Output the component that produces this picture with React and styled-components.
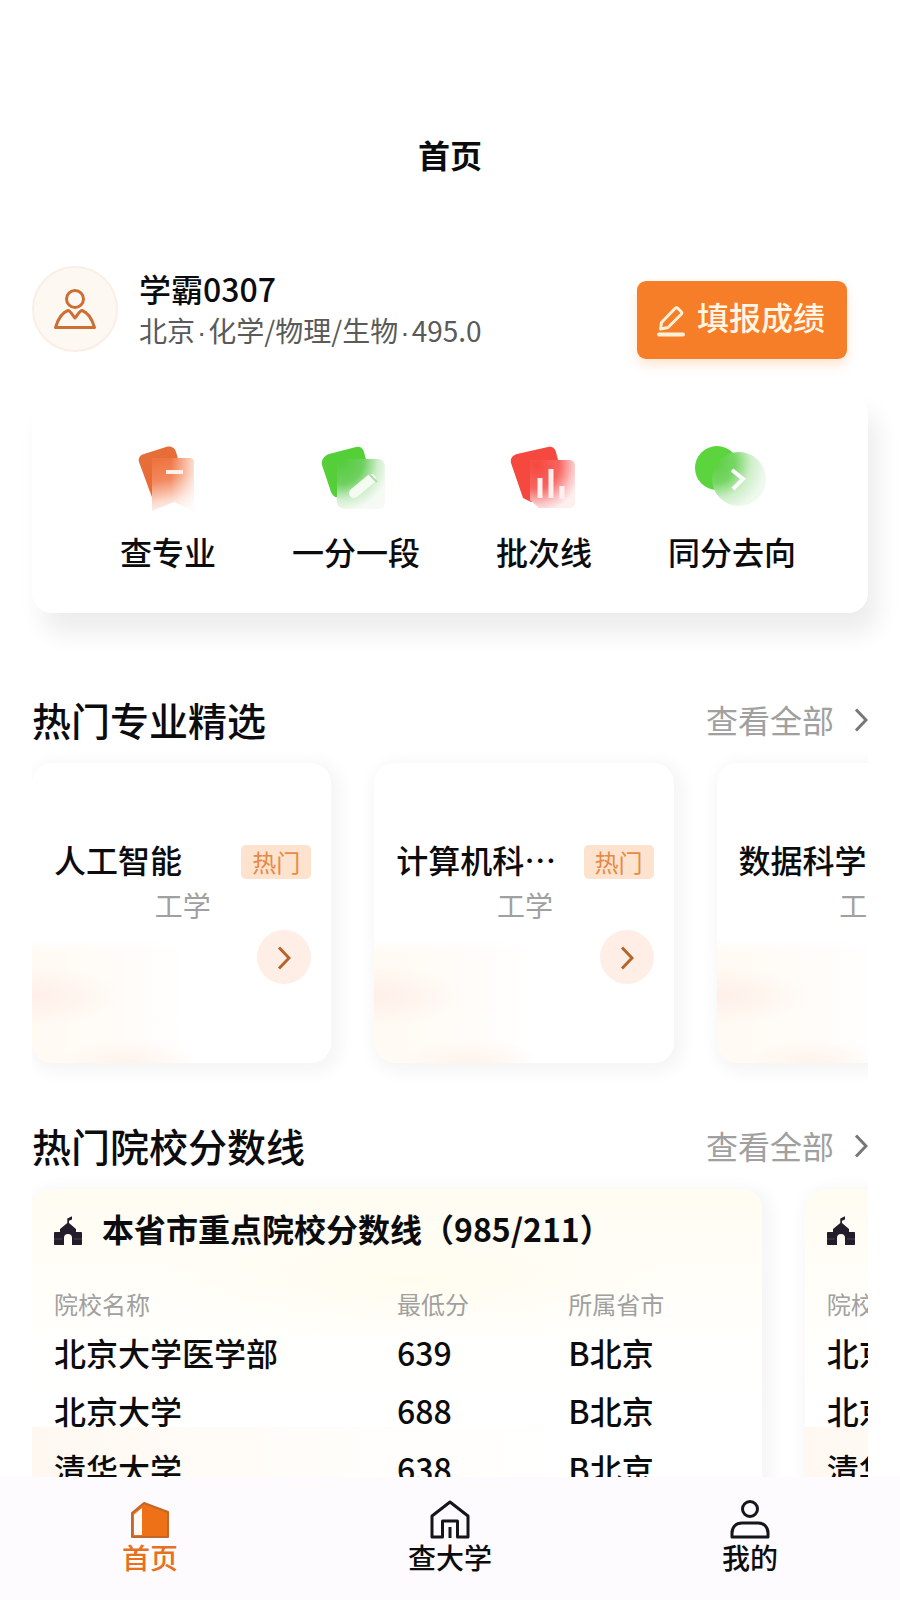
import React from 'react';
import styled, { createGlobalStyle, css } from 'styled-components';

const colors = {
    TEXT_PRIMARY: '#0c0c0e',
    TEXT_SECONDARY: '#5a5a5a',
    TEXT_MUTED: '#a0a0a0',
    ORANGE: '#f77e28',
    ORANGE_DARK: '#e8701c',
    WHITE: '#ffffff',
    NAV: '#fdfbfe',
};

const FONT_SIZE = {
    SMALL: '24px',
    BASE: '28px',
    BIG: '32px',
    HUGE: '39px',
};

const GlobalStyle = createGlobalStyle`
    * {
        box-sizing: border-box;
    }

    body {
        margin: 0;
        background: ${colors.WHITE};
        color: ${colors.TEXT_PRIMARY};
        font-family: 'Noto Sans CJK SC', sans-serif;
        font-size: ${FONT_SIZE.BIG};
        line-height: 40px;
        font-weight: 500;
    }

    a {
        color: inherit;
        text-decoration: none;
    }

    button {
        font: inherit;
        border: 0;
        cursor: pointer;
    }
`;

const Page = styled.div`
    display: flex;
    flex-direction: column;
    height: 100vh;
`;

const Content = styled.main`
    flex: 1;
    min-height: 0;
    padding: 0 32px;
    overflow: hidden auto;
    scrollbar-width: none;
`;

const PageTitle = styled.h1`
    margin: 0;
    padding: 134px 0 92px;
    font-size: ${FONT_SIZE.BIG};
    font-weight: 700;
    text-align: center;
`;

const Profile = styled.section`
    display: flex;
    align-items: flex-start;
    min-height: 93px;
    padding-right: 21px;
`;

const Avatar = styled.div`
    display: flex;
    align-items: center;
    justify-content: center;
    width: 86px;
    height: 86px;
    margin-right: 21px;
    border: 2px solid #faeee7;
    border-radius: 50%;
    background: #fef8f2;
`;

const ProfileText = styled.div`
    flex: 1;
`;

const UserName = styled.h2`
    margin: 0;
    font-size: ${FONT_SIZE.BIG};
    font-weight: 500;
    line-height: 44px;
`;

const UserInfo = styled.p`
    margin: 0;
    font-size: ${FONT_SIZE.BASE};
    font-weight: 400;
    color: ${colors.TEXT_SECONDARY};
`;

/* the CJK middle dot is a full em wide */
const Dot = styled.span`
    margin: 0 2px;
    font-family: 'Liberation Sans', sans-serif;
`;

const ScoreButton = styled.button`
    display: flex;
    align-items: center;
    align-self: flex-end;
    gap: 12px;
    height: 78px;
    padding: 0 22px 8px 20px;
    border-radius: 9px;
    background: ${colors.ORANGE};
    color: #fff6e4;
    box-shadow: 0 6px 12px rgba(249, 127, 40, 0.2);
`;

const QuickCard = styled.nav`
    display: grid;
    grid-template-columns: repeat(4, 1fr);
    margin-top: 34px;
    padding: 50px 42px 42px;
    border-radius: 20px;
    background: ${colors.WHITE};
    box-shadow: 10px 20px 24px rgba(0, 0, 0, 0.075);
`;

const QuickLink = styled.a`
    display: flex;
    flex-direction: column;
    align-items: center;
    gap: 16px;
`;

const SectionHeader = styled.header`
    display: flex;
    align-items: center;
    justify-content: space-between;
    margin-top: ${props => (props.$isFirst ? '82px' : '34px')};
    line-height: 48px;
`;

const SectionTitle = styled.h2`
    margin: 0;
    font-size: ${FONT_SIZE.HUGE};
    font-weight: 500;
`;

const MoreLink = styled.a`
    display: flex;
    align-items: center;
    gap: 20px;
    font-weight: 400;
    color: ${colors.TEXT_MUTED};
`;

const Scroller = styled.div`
    display: flex;
    gap: 43px;
    padding: 20px 0 24px;
    overflow: hidden;
`;

const card = css`
    flex-shrink: 0;
    border-radius: 20px;
    box-shadow: 4px 4px 16px 6px rgba(0, 0, 0, 0.04);
`;

const MajorCard = styled.article`
    ${card};
    width: 35.8%;
    padding: 76px 20px 79px 22px;
    background:
        linear-gradient(to bottom, ${colors.WHITE}, transparent) left bottom 110px / 54% 14px no-repeat,
        radial-gradient(ellipse 90px 30px at 0 46%, rgba(255, 236, 230, 0.8), transparent) left bottom / 54% 124px no-repeat,
        radial-gradient(ellipse 70px 24px at 60% 100%, rgba(255, 240, 232, 0.8), transparent) left bottom / 54% 124px no-repeat,
        linear-gradient(to right, #fffaf2, #fffcf9 60%, ${colors.WHITE}) left bottom / 54% 124px no-repeat,
        ${colors.WHITE};
`;

const MajorTop = styled.div`
    display: flex;
    align-items: flex-end;
    justify-content: space-between;
    gap: 16px;
`;

const MajorName = styled.h3`
    margin: 0;
    font-size: ${FONT_SIZE.BIG};
    font-weight: 500;
    overflow: hidden;
    text-overflow: ellipsis;
    white-space: nowrap;
`;

const HotTag = styled.span`
    flex-shrink: 0;
    padding: 0 11px;
    border-radius: 5px;
    background: #fde2cd;
    color: #e58a48;
    font-size: ${FONT_SIZE.SMALL};
    font-weight: 400;
    line-height: 34px;
`;

const Category = styled.p`
    margin: 6px 0 5px;
    font-size: ${FONT_SIZE.BASE};
    font-weight: 400;
    text-align: center;
    color: ${colors.TEXT_MUTED};
`;

const RoundButton = styled.button`
    display: flex;
    align-items: center;
    justify-content: center;
    width: 54px;
    height: 54px;
    margin-left: auto;
    padding: 0;
    border-radius: 50%;
    background: #feeee5;
`;

const SchoolCard = styled.article`
    ${card};
    width: 87.3%;
    padding: 19px 22px;
    background:
        linear-gradient(to right, #fff8f1, #fffdfa 40%, transparent 80%) 0 238px / 100% 100% no-repeat,
        radial-gradient(ellipse 260px 60px at 52% 90px, #fffcef, transparent),
        linear-gradient(to bottom, #fffcf1, #fffefa 120px, ${colors.WHITE} 220px);
`;

const SchoolTitle = styled.h3`
    display: flex;
    align-items: center;
    gap: 20px;
    margin: 0 0 37px;
    font-size: ${FONT_SIZE.BIG};
    font-weight: 700;
    white-space: nowrap;
`;

const ScoreTable = styled.table`
    width: 100%;
    table-layout: fixed;
    border-collapse: collapse;
    text-align: left;
    white-space: nowrap;

    th {
        height: 38px;
        padding: 0;
        font-size: ${FONT_SIZE.SMALL};
        font-weight: 400;
        line-height: 36px;
        color: ${colors.TEXT_MUTED};
    }

    th:first-child {
        width: 50%;
    }

    td {
        height: 58px;
        padding: 0;
    }
`;

const TabBar = styled.nav`
    display: grid;
    grid-template-columns: repeat(3, 1fr);
    padding: 22px 0 27px;
    background: ${colors.NAV};
`;

const Tab = styled.a`
    display: flex;
    flex-direction: column;
    align-items: center;
    gap: 2px;
    font-size: ${FONT_SIZE.BASE};
    line-height: 32px;
    color: ${props => (props.$isActive ? colors.ORANGE_DARK : colors.TEXT_PRIMARY)};
`;

const QuickSvg = styled.svg`
    overflow: visible;
`;

const Chevron = ({ color }) => (
    <svg width="14" height="26" viewBox="0 -2 14 26" fill="none" stroke={color} strokeWidth="3" aria-hidden="true">
        <path d="M2 1.5 12 12 2 22.5" />
    </svg>
);

const AvatarIcon = () => (
    <svg width="44" height="42" viewBox="0 0 44 42" fill="none" stroke="#cb6f33" strokeWidth="3" strokeLinejoin="round">
        <circle cx="22" cy="11" r="8.500" />
        <path d="M2.500 39.500C5 31 9 24.500 15 22.500c2.500 0 4.500 5 7 7.500 2.500-2.500 4.500-7.500 7-7.500 6 2 10 8.500 12.500 17Z" />
    </svg>
);

const EditIcon = () => (
    <svg width="28" height="42" viewBox="0 -10 28 42" fill="none" stroke="#fff1d8" strokeWidth="3" strokeLinejoin="round">
        <path d="M3.500 24 4.500 17.500 18 3.500c1-1 2-1 3 0l3 3c1 1 1 2 0 3L11 22.500Z" />
        <path d="M2 29.500h24" strokeWidth="4" strokeLinecap="round" />
    </svg>
);

const SchoolIcon = () => (
    <svg width="28" height="38" viewBox="0 -6 28 38" fill="#231d2b" aria-hidden="true">
        <path d="M13.300 8V3.500L18 1.300v3.200l-3 1.200V8l7 6v3h5c.6 0 1 .4 1 1v11c0 .6-.4 1-1 1h-9v-7a4 4 0 0 0-8 0v7H1c-.6 0-1-.4-1-1V18c0-.6.4-1 1-1h5v-3Z" />
        <path d="M0 24h8M20 24h8" stroke="#48424f" strokeWidth="1" />
    </svg>
);

const MajorIcon = () => (
    <QuickSvg width="72" height="72" viewBox="0 0 72 72">
        <defs>
            <linearGradient id="majorBack" x1="0" y1="0" x2="1" y2="1">
                <stop offset="0" stopColor="#e2703c" />
                <stop offset="1" stopColor="#f2662e" />
            </linearGradient>
            <linearGradient id="majorFront" x1="0.3" y1="0" x2="0.45" y2="1">
                <stop offset="0" stopColor="#ee7440" />
                <stop offset="0.4" stopColor="#f3885e" />
                <stop offset="0.8" stopColor="#fbdccf" />
                <stop offset="1" stopColor="#fdf4f0" />
            </linearGradient>
            <linearGradient id="majorFade">
                <stop offset="0.45" stopColor="#fff" stopOpacity="0" />
                <stop offset="1" stopColor="#fff" stopOpacity="0.75" />
            </linearGradient>
        </defs>
        <path d="M12 11 34 4c5-1.500 9 1 10 5l11 36-34 12L7 19c-1-4 1-7 5-8Z" fill="url(#majorBack)" />
        <path d="M20 15h36c4 0 6 2 6 6v47l-20-9-22 9Z" fill="url(#majorFront)" />
        <path d="M20 15h36c4 0 6 2 6 6v47l-20-9-22 9Z" fill="url(#majorFade)" />
        <path d="M34 29h17" stroke="#fff1ea" strokeWidth="4" />
    </QuickSvg>
);

const RankIcon = () => (
    <QuickSvg width="72" height="72" viewBox="0 0 72 72">
        <defs>
            <radialGradient id="rankFront" cx="0.1" cy="0.05" r="1">
                <stop offset="0" stopColor="#54cc3c" />
                <stop offset="0.45" stopColor="#6fd05f" />
                <stop offset="0.75" stopColor="#cfeecb" />
                <stop offset="1" stopColor="#f5fbf4" />
            </radialGradient>
        </defs>
        <path d="M9 11 36 4c4-1 7 1 8 5l9 34-34 11c-4 1-6-1-8-5L2 22c-1-5 2-9 7-11Z" fill="#55cf38" />
        <rect x="17" y="16" width="48" height="50" rx="7" fill="url(#rankFront)" />
        <path d="m34 50 17-14" stroke="#f4fcf2" strokeWidth="10" strokeLinecap="round" />
        <path d="m49 31 8 8" stroke="#a9dfa5" strokeWidth="2" />
    </QuickSvg>
);

const BatchIcon = () => (
    <QuickSvg width="72" height="72" viewBox="0 0 72 72">
        <defs>
            <radialGradient id="batchFront" cx="0.15" cy="0.1" r="1">
                <stop offset="0" stopColor="#f5483f" />
                <stop offset="0.5" stopColor="#f76560" />
                <stop offset="0.8" stopColor="#fbc2c2" />
                <stop offset="1" stopColor="#feeeee" />
            </radialGradient>
        </defs>
        <path d="M9 11 40 4c4-1 7 1 8 5l9 36-34 14-8-4L3 20c-1-5 2-8 6-9Z" fill="#f5493f" />
        <path d="M22 17h39c4 0 6 2 6 6v36c0 4-2 6-6 6H31l-9-8Z" fill="url(#batchFront)" />
        <path d="M32 35v20M43 26v29M54 43v13" stroke="#fff0ee" strokeWidth="5" />
    </QuickSvg>
);

const DirectionIcon = () => (
    <QuickSvg width="72" height="72" viewBox="0 0 72 72">
        <defs>
            <radialGradient id="directionFront" cx="0.05" cy="0.2" r="0.95">
                <stop offset="0" stopColor="#5bd03f" />
                <stop offset="0.4" stopColor="#77d666" />
                <stop offset="0.7" stopColor="#cdeec8" />
                <stop offset="1" stopColor="#eff9ee" />
            </radialGradient>
        </defs>
        <circle cx="21" cy="25" r="22" fill="#5bd43d" />
        <circle cx="43" cy="36" r="27" fill="url(#directionFront)" />
        <path d="m36 27 11 9-10 10" fill="none" stroke="#fff" strokeWidth="4" />
    </QuickSvg>
);

const HomeIcon = () => (
    <svg width="40" height="40" viewBox="0 0 40 40" fill="#ee7117" stroke="#c2672a" strokeWidth="2" strokeLinejoin="round">
        <path d="M2 14 14 4l24 9v25H2Z" />
        <path d="M4 15.500 12 9v27H4Z" fill="#fffaf5" stroke="none" />
    </svg>
);

const CollegeIcon = () => (
    <svg width="40" height="40" viewBox="0 0 40 40" fill="none" stroke="#16151a" strokeWidth="3" strokeLinejoin="round">
        <path d="M2 17 20 3l18 14v21H27.500V22h-15v16H2Z" />
        <path d="M20 28v11" />
    </svg>
);

const MeIcon = () => (
    <svg width="40" height="40" viewBox="0 0 40 40" fill="none" stroke="#16151a" strokeWidth="3" strokeLinejoin="round">
        <circle cx="20" cy="10" r="7.500" />
        <path d="M2 38v-4c0-6 4-10 10-10h16c6 0 10 4 10 10v4Z" />
    </svg>
);

const quickLinks = [
    { label: '查专业', icon: <MajorIcon /> },
    { label: '一分一段', icon: <RankIcon /> },
    { label: '批次线', icon: <BatchIcon /> },
    { label: '同分去向', icon: <DirectionIcon /> },
];

const majors = ['人工智能', '计算机科学与技术', '数据科学与大数据技术'];

const schools = [
    { name: '北京大学医学部', score: 639, province: 'B北京' },
    { name: '北京大学', score: 688, province: 'B北京' },
    { name: '清华大学', score: 638, province: 'B北京' },
];

const tabs = [
    { label: '首页', icon: <HomeIcon />, isActive: true },
    { label: '查大学', icon: <CollegeIcon /> },
    { label: '我的', icon: <MeIcon /> },
];

const Section = ({ title, isFirst, children }) => (
    <section>
        <SectionHeader $isFirst={isFirst}>
            <SectionTitle>{title}</SectionTitle>
            <MoreLink href="#all">
                查看全部
                <Chevron color="#777777" />
            </MoreLink>
        </SectionHeader>
        <Scroller>{children}</Scroller>
    </section>
);

const Major = ({ name }) => (
    <MajorCard>
        <MajorTop>
            <MajorName>{name}</MajorName>
            <HotTag>热门</HotTag>
        </MajorTop>
        <Category>工学</Category>
        <RoundButton type="button" aria-label={name}>
            <Chevron color="#b5652b" />
        </RoundButton>
    </MajorCard>
);

const SchoolScores = () => (
    <SchoolCard>
        <SchoolTitle>
            <SchoolIcon />
            本省市重点院校分数线（985/211）
        </SchoolTitle>
        <ScoreTable>
            <thead>
                <tr>
                    <th scope="col">院校名称</th>
                    <th scope="col">最低分</th>
                    <th scope="col">所属省市</th>
                </tr>
            </thead>
            <tbody>
                {schools.map(school => (
                    <tr key={school.name}>
                        <td>{school.name}</td>
                        <td>{school.score}</td>
                        <td>{school.province}</td>
                    </tr>
                ))}
            </tbody>
        </ScoreTable>
    </SchoolCard>
);

const App = () => (
    <Page lang="zh-CN">
        <GlobalStyle />
        <Content>
            <PageTitle>首页</PageTitle>
            <Profile>
                <Avatar><AvatarIcon /></Avatar>
                <ProfileText>
                    <UserName>学霸0307</UserName>
                    <UserInfo>
                        北京<Dot>·</Dot>化学/物理/生物<Dot>·</Dot>495.0
                    </UserInfo>
                </ProfileText>
                <ScoreButton type="button">
                    <EditIcon />
                    填报成绩
                </ScoreButton>
            </Profile>
            <QuickCard>
                {quickLinks.map(({ label, icon }) => (
                    <QuickLink key={label} href="#quick">
                        {icon}
                        {label}
                    </QuickLink>
                ))}
            </QuickCard>
            <Section title="热门专业精选" isFirst>
                {majors.map(name => <Major key={name} name={name} />)}
            </Section>
            <Section title="热门院校分数线">
                <SchoolScores />
                <SchoolScores />
            </Section>
        </Content>
        <TabBar>
            {tabs.map(({ label, icon, isActive }) => (
                <Tab key={label} href="#tab" $isActive={isActive}>
                    {icon}
                    {label}
                </Tab>
            ))}
        </TabBar>
    </Page>
);

export default App;
